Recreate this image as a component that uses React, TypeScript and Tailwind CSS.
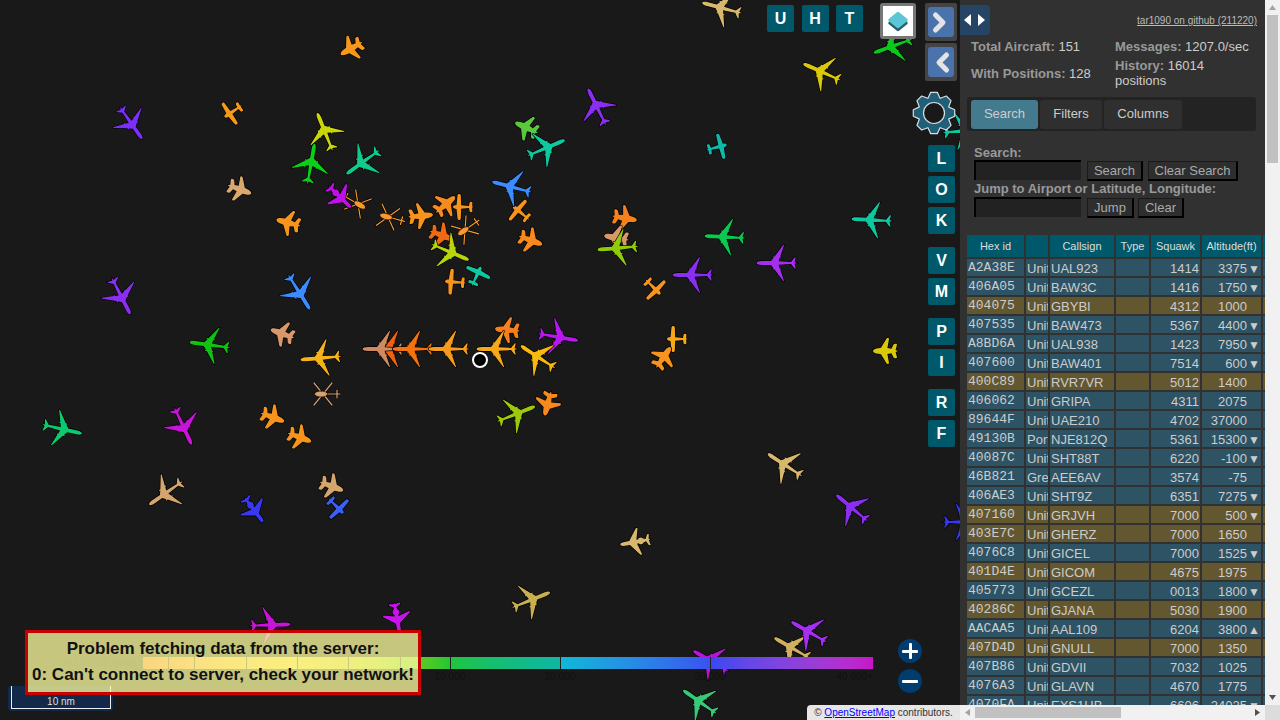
type Kind = 'jet' | 'twin' | 'prop' | 'biz' | 'heli'
type Plane = [number, number, number, string, Kind, number?]

// x, y, heading, colour, type, scale
const planes: Plane[] = [
  [352, 48, 240, '#f7981d', 'twin'],
  [131, 123, 145, '#7b2ff7', 'jet', 0.95],
  [232, 112, 236, '#f7981d', 'prop'],
  [325, 132, 338, '#c8d60a', 'jet'],
  [311, 164, 10, '#0ccf1a', 'jet'],
  [363, 162, 234, '#10c98a', 'jet'],
  [239, 189, 110, '#d9a86c', 'twin'],
  [289, 223, 285, '#f7941d', 'twin'],
  [358, 204, 120, '#f79a2e', 'heli'],
  [340, 197, 134, '#c010e8', 'biz'],
  [388, 217, 285, '#f79a2e', 'heli'],
  [420, 216, 85, '#f7941d', 'twin'],
  [445, 205, 50, '#f78b1d', 'twin'],
  [462, 207, 270, '#f7941d', 'prop'],
  [441, 235, 110, '#f06a14', 'twin'],
  [465, 230, 235, '#f79a2e', 'heli'],
  [450, 252, 113, '#b8d40a', 'jet'],
  [477, 275, 25, '#10c8a0', 'prop'],
  [454, 282, 275, '#f7941d', 'prop'],
  [299, 292, 148, '#3a8cff', 'jet'],
  [121, 296, 153, '#8a2ff0', 'jet'],
  [283, 334, 290, '#d9986a', 'twin'],
  [210, 345, 278, '#12c212', 'jet'],
  [321, 358, 265, '#f5b21a', 'jet'],
  [391, 349, 270, '#f0620f', 'jet'],
  [383, 349, 270, '#cf8a62', 'jet'],
  [413, 349, 270, '#f5720f', 'jet'],
  [449, 349, 270, '#f79b1e', 'jet'],
  [508, 330, 275, '#f57f1e', 'twin'],
  [497, 349, 270, '#f5a81a', 'jet'],
  [558, 337, 100, '#b818f0', 'jet'],
  [538, 357, 303, '#f7b80f', 'jet'],
  [516, 414, 68, '#9ec90a', 'jet'],
  [548, 403, 195, '#f7891d', 'twin'],
  [654, 288, 135, '#f7941d', 'prop'],
  [530, 240, 110, '#f7891d', 'twin'],
  [520, 212, 310, '#f7941d', 'prop'],
  [512, 187, 285, '#3a8cff', 'jet'],
  [527, 128, 295, '#5ac83c', 'twin'],
  [546, 148, 67, '#10c8a0', 'jet'],
  [597, 107, 334, '#8a2ff0', 'jet'],
  [718, 147, 75, '#10b8a8', 'prop'],
  [624, 218, 100, '#f7811d', 'twin'],
  [617, 238, 280, '#d9986a', 'twin'],
  [618, 248, 265, '#8ecb0a', 'jet'],
  [725, 237, 273, '#0cc850', 'jet'],
  [693, 275, 270, '#8a2ff0', 'jet'],
  [777, 263, 270, '#a52ff0', 'jet'],
  [872, 220, 273, '#10c8a0', 'jet'],
  [822, 72, 294, '#dcc80a', 'jet'],
  [893, 46, 250, '#0cc81a', 'jet'],
  [722, 8, 285, '#d8b86c', 'jet'],
  [963, 131, 85, '#10c8a0', 'jet'],
  [886, 351, 270, '#dcc80a', 'twin'],
  [676, 339, 270, '#f5a81a', 'prop'],
  [663, 358, 35, '#f7941d', 'twin'],
  [272, 417, 110, '#f7941d', 'twin'],
  [299, 437, 110, '#f7941d', 'twin'],
  [183, 426, 155, '#c814d8', 'jet'],
  [62, 429, 103, '#0cc86e', 'jet'],
  [166, 493, 235, '#d4a66e', 'jet'],
  [254, 510, 143, '#3838f0', 'biz'],
  [331, 486, 110, '#d4a66e', 'twin'],
  [337, 507, 135, '#3a60f8', 'prop'],
  [323, 394, 270, '#d9a070', 'heli'],
  [785, 465, 303, '#d8b86c', 'jet'],
  [852, 508, 310, '#8a2ff0', 'jet'],
  [635, 542, 260, '#d8b86c', 'biz'],
  [531, 600, 68, '#c8b050', 'jet'],
  [792, 648, 300, '#d0b060', 'jet'],
  [809, 632, 300, '#a52ff0', 'jet'],
  [270, 625, 88, '#c814d8', 'jet'],
  [397, 618, 170, '#c814e8', 'biz'],
  [711, 661, 300, '#b814d8', 'jet'],
  [700, 702, 305, '#38c878', 'jet'],
  [963, 522, 90, '#3838f0', 'jet'],
]

const shapes: Record<Exclude<Kind, 'heli'>, string> = {
  jet: 'M0 -20.5C1.2 -20.5 2 -18 2 -15L1.9 -6 5.4 -3.2V-4.2H6.4V-2.4L18 6.2 18.2 7.2 6.4 3.2V4H5.4V2.8L1.8 1.6 1.1 14 5.6 17.6 5.8 18.8 0.8 17.6 0 20.5 -0.8 17.6 -5.8 18.8 -5.6 17.6 -1.1 14 -1.8 1.6 -5.4 2.8V4H-6.4V3.2L-18.2 7.2 -18 6.2 -6.4 -2.4V-4.2H-5.4V-3.2L-1.9 -6 -2 -15C-2 -18 -1.2 -20.5 0 -20.5Z',
  twin: 'M0 -13C1.5 -13 2.6 -10.5 2.8 -7.5L3.2 -5 12.4 0.6C13.2 1.4 13 3 12 3L3 1.4 2.2 5.5 6.6 7.5C7.6 8.6 7.4 11 6.2 11L1 9.6 0 12 -1 9.6 -6.2 11C-7.4 11 -7.6 8.6 -6.6 7.5L-2.2 5.5 -3 1.4 -12 3C-13 3 -13.2 1.4 -12.4 0.6L-3.2 -5 -2.8 -7.5C-2.6 -10.5 -1.5 -13 0 -13Z',
  prop: 'M0 -9C1.2 -9 1.8 -7.5 1.9 -5.5L11.8 -4.5C13.4 -4 13.4 -1.6 11.8 -1.2L1.8 -0.8 1 7 4.6 7.6C5.4 8 5.4 10.2 4.6 10.4L0.6 10.2 0 12 -0.6 10.2 -4.6 10.4C-5.4 10.2 -5.4 8 -4.6 7.6L-1 7 -1.8 -0.8 -11.8 -1.2C-13.4 -1.6 -13.4 -4 -11.8 -4.5L-1.9 -5.5C-1.8 -7.5 -1.2 -9 0 -9Z',
  biz: 'M0 -15C1.2 -15 1.9 -13 1.9 -10.5L2 -5.5 13.5 3.2 13.6 5 2 1.8 2 3.5C3.6 4 4 7.4 2 8.4L1.2 11 5.6 13.2 5.8 15 0.6 14 0 15.6 -0.6 14 -5.8 15 -5.6 13.2 -1.2 11 -2 8.4C-4 7.4 -3.6 4 -2 3.5L-2 1.8 -13.6 5 -13.5 3.2 -2 -5.5 -1.9 -10.5C-1.9 -13 -1.2 -15 0 -15Z',
}

function PlaneIcon({ plane }: { plane: Plane }) {
  const [x, y, heading, color, kind, scale = 1] = plane
  const transform = `translate(${x} ${y}) rotate(${heading}) scale(${scale})`
  if (kind === 'heli') {
    return (
      <g transform={transform} strokeLinecap="round">
        <path d="M-11 -9L11 9M11 -9L-11 9M0 2V17M-4 14H4" stroke="#000" strokeWidth="2.4" fill="none" />
        <path d="M-11 -9L11 9M11 -9L-11 9M0 2V17M-4 14H4" stroke={color} strokeWidth="1.2" fill="none" />
        <ellipse cx="0" cy="-2" rx="3" ry="6.5" fill={color} stroke="#000" strokeWidth="0.6" />
      </g>
    )
  }
  return <path transform={transform} d={shapes[kind]} fill={color} stroke="#000" strokeWidth="1.3" strokeLinejoin="round" paintOrder="stroke" />
}

function gearPath() {
  const pts: string[] = []
  for (let i = 0; i < 8; i++) {
    const a = (i * Math.PI) / 4 - Math.PI / 2
    const p = (r: number, off: number) => `${(22 + r * Math.cos(a + off)).toFixed(1)} ${(22 + r * Math.sin(a + off)).toFixed(1)}`
    pts.push(p(16, -0.38), p(21, -0.16), p(21, 0.16), p(16, 0.38))
  }
  return `M${pts.join('L')}Z`
}

type Row = [string, string, string, string, string, string, boolean]

const rows: Row[] = [
  ['A2A38E', 'United States', 'UAL923', '1414', '3375', '▼', false],
  ['406A05', 'United Kingdom', 'BAW3C', '1416', '1750', '▼', false],
  ['404075', 'United Kingdom', 'GBYBI', '4312', '1000', '', true],
  ['407535', 'United Kingdom', 'BAW473', '5367', '4400', '▼', false],
  ['A8BD6A', 'United States', 'UAL938', '1423', '7950', '▼', false],
  ['407600', 'United Kingdom', 'BAW401', '7514', '600', '▼', false],
  ['400C89', 'United Kingdom', 'RVR7VR', '5012', '1400', '', true],
  ['406062', 'United Kingdom', 'GRIPA', '4311', '2075', '', false],
  ['89644F', 'United Arab Emirates', 'UAE210', '4702', '37000', '', false],
  ['49130B', 'Portugal', 'NJE812Q', '5361', '15300', '▼', false],
  ['40087C', 'United Kingdom', 'SHT88T', '6220', '-100', '▼', false],
  ['46B821', 'Greece', 'AEE6AV', '3574', '-75', '', false],
  ['406AE3', 'United Kingdom', 'SHT9Z', '6351', '7275', '▼', false],
  ['407160', 'United Kingdom', 'GRJVH', '7000', '500', '▼', true],
  ['403E7C', 'United Kingdom', 'GHERZ', '7000', '1650', '', true],
  ['4076C8', 'United Kingdom', 'GICEL', '7000', '1525', '▼', false],
  ['401D4E', 'United Kingdom', 'GICOM', '4675', '1975', '', true],
  ['405773', 'United Kingdom', 'GCEZL', '0013', '1800', '▼', false],
  ['40286C', 'United Kingdom', 'GJANA', '5030', '1900', '', true],
  ['AACAA5', 'United States', 'AAL109', '6204', '3800', '▲', false],
  ['407D4D', 'United Kingdom', 'GNULL', '7000', '1350', '', true],
  ['407B86', 'United Kingdom', 'GDVII', '7032', '1025', '', false],
  ['4076A3', 'United Kingdom', 'GLAVN', '4670', '1775', '', false],
  ['4070FA', 'United Kingdom', 'EXS1HB', '6606', '24025', '▼', false],
]

const columns = ['Hex id', '', 'Callsign', 'Type', 'Squawk', 'Altitude(ft)', '']

function LetterButton({ label }: { label: string }) {
  return (
    <div className="w-[27px] h-[27px] rounded-[2px] bg-[#00596b] text-white font-bold text-[16px] flex items-center justify-center">
      {label}
    </div>
  )
}

function ArrowButton({ left }: { left?: boolean }) {
  return (
    <div className="w-[32px] h-[38px] bg-[#444] rounded-[2px] flex items-center justify-center">
      <div className="w-[26px] h-[30px] bg-[#4a72ab] rounded-[3px]">
        <svg width="26" height="30" viewBox="0 0 26 30" fill="none" stroke="#e4e4e4" strokeWidth="5" strokeLinecap="round" strokeLinejoin="round">
          <path d={left ? 'M18.5 8L11 15.5 18.5 23' : 'M7.5 8L15 15.5 7.5 23'} />
        </svg>
      </div>
    </div>
  )
}

function MapView() {
  return (
    <div className="relative w-[960px] h-full shrink-0 overflow-hidden bg-[#191919]">
      <svg className="absolute inset-0" width="960" height="720" viewBox="0 0 960 720">
        {planes.map((p, i) => (
          <PlaneIcon key={i} plane={p} />
        ))}
        <circle cx="480" cy="360" r="7" fill="#000" stroke="#fff" strokeWidth="2" />
      </svg>

      <div className="absolute top-[5px] right-[97px] flex gap-[7.5px]">
        <LetterButton label="U" />
        <LetterButton label="H" />
        <LetterButton label="T" />
      </div>

      <div className="absolute top-[3px] right-[44px] w-[36px] h-[36px] border-[3px] border-[#777] rounded-[3px] bg-white flex items-center justify-center">
        <svg width="24" height="24" viewBox="0 0 24 24">
          <path d="M12 7.5L20 14 12 20.5 4 14Z" fill="#2f5d6e" strokeLinejoin="round" stroke="#2f5d6e" strokeWidth="3.5" />
          <path d="M12 4.5L20 11 12 17.5 4 11Z" fill="#5cc6d6" strokeLinejoin="round" stroke="#5cc6d6" strokeWidth="3.5" />
        </svg>
      </div>

      <div className="absolute top-[3px] right-[3px] flex flex-col items-end">
        <div className="flex flex-col gap-[2px]">
          <ArrowButton />
          <ArrowButton left />
        </div>
        <svg width="44" height="44" viewBox="0 0 44 44" className="mt-[10px] mr-[1px]">
          <path d={gearPath()} fill="#1f5f78" stroke="#d8dee0" strokeWidth="1.2" strokeLinejoin="round" />
          <circle cx="22" cy="22" r="10.5" fill="#191919" stroke="#d8dee0" strokeWidth="1.2" />
          <circle cx="20" cy="30" r="1.6" fill="#191919" />
        </svg>
        <div className="mt-[10px] mr-[2px] flex flex-col gap-[13px]">
          <div className="flex flex-col gap-[4px]">
            <LetterButton label="L" />
            <LetterButton label="O" />
            <LetterButton label="K" />
          </div>
          <div className="flex flex-col gap-[4px]">
            <LetterButton label="V" />
            <LetterButton label="M" />
          </div>
          <div className="flex flex-col gap-[4px]">
            <LetterButton label="P" />
            <LetterButton label="I" />
          </div>
          <div className="flex flex-col gap-[4px]">
            <LetterButton label="R" />
            <LetterButton label="F" />
          </div>
        </div>
      </div>

      <div className="absolute left-[143px] bottom-[51px] w-[730px] h-[12px] flex text-[10px] leading-[12px] text-[#111]">
        <span className="absolute right-full mr-[7px] top-0 whitespace-nowrap">ALTITUDE (feet)</span>
        <div className="w-[25px] bg-linear-to-r from-[#f05820] to-[#f06a20]" />
        <div className="w-[26px] border-l border-[#222] bg-linear-to-r from-[#f06a20] to-[#f08420]" />
        <div className="w-[52px] border-l border-[#222] bg-linear-to-r from-[#f08420] to-[#f0a820]" />
        <div className="w-[51px] border-l border-[#222] bg-linear-to-r from-[#f0a820] to-[#e8c01c]" />
        <div className="w-[51px] border-l border-[#222] bg-linear-to-r from-[#e8c01c] to-[#c0c01c]" />
        <div className="w-[52px] border-l border-[#222] bg-linear-to-r from-[#c0c01c] to-[#70c820]" />
        <div className="w-[50px] border-l border-[#222] bg-linear-to-r from-[#70c820] to-[#20c830]" />
        <div className="w-[110px] border-l border-[#222] bg-linear-to-r from-[#20c43c] to-[#12b5a5]" />
        <div className="w-[150px] border-l border-[#222] bg-linear-to-r from-[#10b8d8] to-[#3a50f0]" />
        <div className="w-[163px] border-l border-[#222] bg-linear-to-r from-[#3a48f0] to-[#c814c8]" />
        <span className="absolute top-[14px] left-[307px] -translate-x-1/2">10,000</span>
        <span className="absolute top-[14px] left-[417px] -translate-x-1/2">20,000</span>
        <span className="absolute top-[14px] left-[567px] -translate-x-1/2">30,000</span>
        <span className="absolute top-[14px] right-0">40,000+</span>
      </div>

      <div className="absolute left-[8px] bottom-[9px] w-[105px] h-[25px] rounded-[3px] bg-[#13294a] px-[3px]">
        <div className="w-[100px] h-[23px] border border-t-0 border-[#eee] text-[#ddd] text-[10px] leading-[12px] text-center flex items-end justify-center">
          10 nm
        </div>
      </div>

      <div className="absolute left-[25px] top-[630px] w-[396px] h-[65px] border-[3px] border-[#c80000] bg-[#ffffa1]/75 text-[#111] font-bold text-[17px] leading-[26px] text-center py-[3px] whitespace-nowrap">
        <div>Problem fetching data from the server:</div>
        <div>0: Can't connect to server, check your network!</div>
      </div>

      <div className="absolute left-[898px] top-[639px] flex flex-col gap-[6px]">
        <div className="w-[24px] h-[24px] rounded-full bg-[#003c6e] relative">
          <div className="absolute left-[4px] top-[10.5px] w-[16px] h-[3px] rounded-[1px] bg-white" />
          <div className="absolute left-[10.5px] top-[4px] w-[3px] h-[16px] rounded-[1px] bg-white" />
        </div>
        <div className="w-[24px] h-[24px] rounded-full bg-[#003c6e] relative">
          <div className="absolute left-[4px] top-[10.5px] w-[16px] h-[3px] rounded-[1px] bg-white" />
        </div>
      </div>

      <div className="absolute right-0 bottom-0 w-[153px] h-[15px] rounded-tl-[4px] bg-[#e6e6e6] text-[#333] text-[10px] leading-[15px] text-center whitespace-nowrap">
        © <a className="text-[#00f] underline">OpenStreetMap</a> contributors.
      </div>
    </div>
  )
}

function FormButton({ label, width }: { label: string; width: string }) {
  return (
    <button className={`h-[20px] ${width} bg-[#2e2e2e] text-[#aaa] text-[13px] leading-[16px] border-r-2 border-b-2 border-t border-l border-[#000] border-t-[#1a1a1a] border-l-[#1a1a1a]`}>
      {label}
    </button>
  )
}

function Sidebar() {
  return (
    <div className="w-[320px] h-full shrink-0 flex flex-col bg-[#313131] text-[13px]">
      <div className="flex flex-1 min-h-0">
        <div className="w-[305px] overflow-hidden">
          <div className="pt-[5px] h-[35px] flex justify-between items-start pr-[8px]">
            <div className="w-[30px] h-[30px] bg-[#264464] rounded-r-[3px] flex items-center justify-center">
              <svg width="22" height="12" viewBox="0 0 22 12" fill="#fff">
                <path d="M7 0V12L0 6ZM14 0V12L21 6Z" />
              </svg>
            </div>
            <a className="text-[10px] leading-[15px] mt-[8px] text-[#bbb] underline">tar1090 on github (211220)</a>
          </div>

          <div className="grid grid-cols-[144px_141px] pl-[11px] text-[#ccc] leading-[15px]">
            <div className="h-[22px] flex items-center">
              <span><b className="text-[#999]">Total Aircraft:</b> 151</span>
            </div>
            <div className="h-[22px] flex items-center">
              <span><b className="text-[#999]">Messages:</b> 1207.0/sec</span>
            </div>
            <div className="h-[32px] flex items-center">
              <span><b className="text-[#999]">With Positions:</b> 128</span>
            </div>
            <div className="h-[32px] flex items-center">
              <span><b className="text-[#999]">History:</b> 16014 positions</span>
            </div>
          </div>

          <div className="mt-[8px] ml-[7px] w-[289px] h-[34px] bg-[#232323] rounded-[3px] flex items-center gap-[2px] px-[4px] text-[#ccc]">
            <div className="w-[67px] h-[29px] rounded-[3px] bg-[#447a8e] flex items-center justify-center">Search</div>
            <div className="w-[62px] h-[29px] rounded-[3px] bg-[#2f2f2f] flex items-center justify-center">Filters</div>
            <div className="w-[78px] h-[29px] rounded-[3px] bg-[#2f2f2f] flex items-center justify-center">Columns</div>
          </div>

          <div className="mt-[14px] ml-[14px] text-[#999] font-bold leading-[15px]">
            <div>Search:</div>
            <div className="flex gap-[5px] items-start">
              <input className="w-[107px] h-[20px] bg-[#222] border-t-2 border-l-2 border-black" />
              <div className="flex gap-[5px] font-normal mt-px ml-px">
                <FormButton label="Search" width="w-[56px]" />
                <FormButton label="Clear Search" width="w-[90px]" />
              </div>
            </div>
            <div>Jump to Airport or Latitude, Longitude:</div>
            <div className="mt-px flex gap-[5px] items-start">
              <input className="w-[107px] h-[20px] bg-[#222] border-t-2 border-l-2 border-black" />
              <div className="flex gap-[4px] font-normal mt-px ml-px">
                <FormButton label="Jump" width="w-[47px]" />
                <FormButton label="Clear" width="w-[46px]" />
              </div>
            </div>
          </div>

          <table className="mt-[15px] ml-[5px] w-[569px] max-w-none table-fixed border-separate border-spacing-[2px] text-[#ccc]">
            <colgroup>
              <col className="w-[57px]" />
              <col className="w-[22px]" />
              <col className="w-[64px]" />
              <col className="w-[33px]" />
              <col className="w-[49px]" />
              <col className="w-[59px]" />
              <col />
            </colgroup>
            <thead>
              <tr>
                {columns.map((c, i) => (
                  <th key={i} className="h-[22px] p-0 bg-[#00596b] text-[#ddd] text-[11px] font-normal text-center">
                    {c}
                  </th>
                ))}
              </tr>
            </thead>
            <tbody>
              {rows.map((r) => {
                const bg = r[6] ? 'bg-[#635730]' : 'bg-[#2d5364]'
                return (
                  <tr key={r[0]}>
                    <td className={`h-[17px] p-0 pl-px leading-[15px] font-['Liberation_Mono',monospace] ${bg}`}>{r[0]}</td>
                    <td className={`h-[17px] p-0 pl-px pt-[3px] leading-[14px] overflow-hidden whitespace-nowrap ${bg}`}>{r[1]}</td>
                    <td className={`h-[17px] p-0 pl-px pt-px leading-[15px] ${bg}`}>{r[2]}</td>
                    <td className={`h-[17px] p-0 ${bg}`} />
                    <td className={`h-[17px] p-0 pr-px pt-px leading-[15px] text-right ${bg}`}>{r[3]}</td>
                    <td className={`h-[17px] p-0 pt-px leading-[15px] text-right whitespace-nowrap ${bg}`}>
                      {r[4]}
                      <span className="inline-block w-[14px] text-center text-[12px] leading-[12px]">{r[5]}</span>
                    </td>
                    <td className={`h-[17px] p-0 ${bg}`} />
                  </tr>
                )
              })}
            </tbody>
          </table>
        </div>

        <div className="w-[15px] shrink-0 bg-[#f1f1f1] flex flex-col items-center">
          <svg width="15" height="15" viewBox="0 0 15 15" className="shrink-0" fill="#a3a3a3">
            <path d="M7.5 5L11 10H4Z" />
          </svg>
          <div className="w-[11px] h-[148px] bg-[#c1c1c1]" />
          <svg width="15" height="15" viewBox="0 0 15 15" className="shrink-0 mt-auto" fill="#505050">
            <path d="M7.5 10L4 5H11Z" />
          </svg>
        </div>
      </div>

      <div className="h-[15px] shrink-0 flex bg-[#f1f1f1]">
        <svg width="15" height="15" viewBox="0 0 15 15" className="shrink-0" fill="#a3a3a3">
          <path d="M5 7.5L10 4V11Z" />
        </svg>
        <div className="flex-1 flex items-center">
          <div className="w-[146px] h-[11px] bg-[#c1c1c1]" />
        </div>
        <svg width="15" height="15" viewBox="0 0 15 15" className="shrink-0" fill="#505050">
          <path d="M10 7.5L5 4V11Z" />
        </svg>
        <div className="w-[15px] bg-[#dcdcdc]" />
      </div>
    </div>
  )
}

export default function App() {
  return (
    <div className="flex w-[1280px] h-screen overflow-hidden font-['Liberation_Sans',Arial,sans-serif]">
      <MapView />
      <Sidebar />
    </div>
  )
}
